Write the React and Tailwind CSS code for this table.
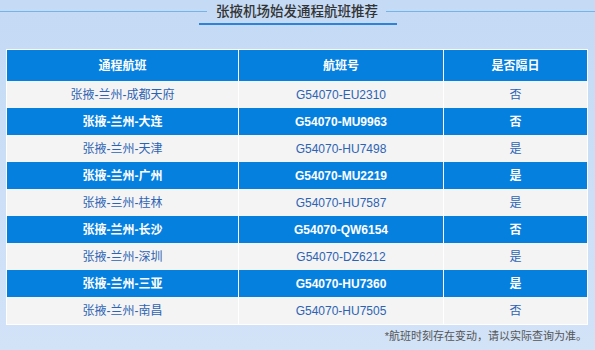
import React from "react";

const rows = [
  ["张掖-兰州-成都天府", "G54070-EU2310", "否"],
  ["张掖-兰州-大连", "G54070-MU9963", "否"],
  ["张掖-兰州-天津", "G54070-HU7498", "是"],
  ["张掖-兰州-广州", "G54070-MU2219", "是"],
  ["张掖-兰州-桂林", "G54070-HU7587", "是"],
  ["张掖-兰州-长沙", "G54070-QW6154", "否"],
  ["张掖-兰州-深圳", "G54070-DZ6212", "是"],
  ["张掖-兰州-三亚", "G54070-HU7360", "是"],
  ["张掖-兰州-南昌", "G54070-HU7505", "否"],
];

export default function App() {
  return (
    <div
      className="w-[595px] h-[350px] overflow-hidden bg-gradient-to-b from-[#c4daf5] to-[#d2e3f8] text-[12px]"
      style={{ fontFamily: '"Liberation Sans", "Noto Sans CJK SC", sans-serif' }}
    >
      <div className="flex items-center pt-[1px] h-[22px]">
        <div className="w-[207px] h-px bg-[#74b4ec]" />
        <div className="ml-[9px] text-[13.5px] leading-[22px] text-[#333] font-medium">
          张掖机场始发通程航班推荐
        </div>
        <div className="ml-[8px] flex-1 h-px bg-[#74b4ec]" />
      </div>
      <div className="mx-auto mt-[1px] w-[198px] h-[2px] bg-[#2e83d6]" />
      <div className="mx-[6px] mt-[24px] w-[582px] border border-white">
        <div className="grid grid-cols-[231px_205px_144px] h-[31px] bg-[#0580df] text-white font-bold">
          <div className="flex items-center justify-center">通程航班</div>
          <div className="flex items-center justify-center border-l border-white">航班号</div>
          <div className="flex items-center justify-center border-l border-white">是否隔日</div>
        </div>
        {rows.map((r, i) => {
          const blue = i % 2 === 1;
          return (
            <div
              key={i}
              className={
                blue
                  ? "grid grid-cols-[231px_205px_144px] h-[27px] bg-[#0580df] text-white font-bold"
                  : "grid grid-cols-[231px_205px_144px] h-[27px] bg-[#f4f4f4] text-[#2d63b3]"
              }
            >
              <div className="flex items-center justify-center">{r[0]}</div>
              <div className="flex items-center justify-center border-l border-white">{r[1]}</div>
              <div className="flex items-center justify-center border-l border-white">{r[2]}</div>
            </div>
          );
        })}
      </div>
      <div className="pr-[8px] mt-[3px] text-right text-[11px] leading-[16px] text-[#555]">
        *航班时刻存在变动，请以实际查询为准。
      </div>
    </div>
  );
}
